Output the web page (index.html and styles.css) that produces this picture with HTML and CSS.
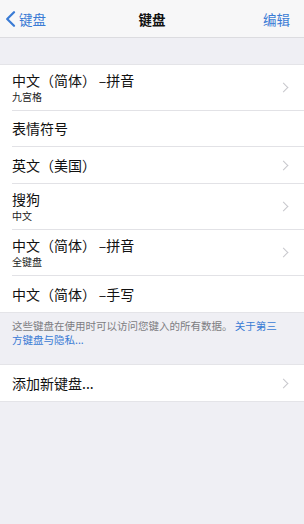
FILE: index.html
```html
<!DOCTYPE html>
<html lang="zh-CN">
<head>
<meta charset="utf-8">
<link rel="stylesheet" href="styles.css">
</head>
<body>
<header class="nav">
  <div class="nav-back">
    <svg class="back-icon" width="11" height="16" viewBox="0 0 11 16"><path d="M9 1.2 L2.2 8 L9 14.8" fill="none" stroke="currentColor" stroke-width="2.2" stroke-linecap="round" stroke-linejoin="round"/></svg>
    <span>键盘</span>
  </div>
  <div class="nav-title">键盘</div>
  <div class="nav-edit">编辑</div>
</header>
<div class="spacer"></div>
<section class="group">
  <div class="row h46"><div class="cell"><div class="texts"><div class="title">中文（简体）&thinsp;–拼音</div><div class="sub">九宫格</div></div><span class="chev"></span></div></div>
  <div class="row h36"><div class="cell"><div class="texts"><div class="title">表情符号</div></div></div></div>
  <div class="row h37"><div class="cell"><div class="texts"><div class="title">英文（美国）</div></div><span class="chev"></span></div></div>
  <div class="row h46"><div class="cell"><div class="texts"><div class="title">搜狗</div><div class="sub">中文</div></div><span class="chev"></span></div></div>
  <div class="row h46"><div class="cell"><div class="texts"><div class="title">中文（简体）&thinsp;–拼音</div><div class="sub">全键盘</div></div><span class="chev"></span></div></div>
  <div class="row h36 last"><div class="cell"><div class="texts"><div class="title">中文（简体）&thinsp;–手写</div></div></div></div>
</section>
<div class="footer">
  <div class="fline">这些键盘在使用时可以访问您键入的所有数据。 <span class="link">关于第三</span></div>
  <div class="fline link">方键盘与隐私...</div>
</div>
<section class="group">
  <div class="row h36 last"><div class="cell"><div class="texts"><div class="title">添加新键盘...</div></div><span class="chev"></span></div></div>
</section>
</body>
</html>
```
FILE: styles.css
```css
* { box-sizing: border-box; }
html, body { margin: 0; padding: 0; }
body {
  background: #efeff4;
  font-family: "Noto Sans CJK SC", "Noto Sans", sans-serif;
  color: #111;
  width: 304px;
  height: 524px;
  overflow: hidden;
}
.nav {
  height: 38px;
  background: #f7f7f8;
  border-bottom: 1px solid #dcdce0;
  display: flex;
  align-items: center;
  justify-content: space-between;
  padding: 0 14px 0 5px;
  position: relative;
}
.nav-back {
  display: flex;
  align-items: center;
  gap: 3px;
  color: #3a7bd5;
  font-size: 13.5px;
}
.back-icon { display: block; }
.nav-title {
  position: absolute;
  left: 0;
  right: 0;
  text-align: center;
  font-size: 13.5px;
  font-weight: 700;
  pointer-events: none;
}
.nav-edit {
  color: #3a7bd5;
  font-size: 13.5px;
}
.spacer { height: 26px; }
.group {
  background: #fff;
  border-top: 1px solid #e4e4e8;
  border-bottom: 1px solid #e4e4e8;
}
.row { padding-left: 12px; }
.cell {
  display: flex;
  align-items: center;
  justify-content: space-between;
  height: 100%;
  padding-right: 15px;
  border-bottom: 1px solid #e2e2e6;
}
.row.last .cell { border-bottom: none; }
.h46 { height: 46px; }
.h36 { height: 36px; }
.h37 { height: 37px; }
.texts { display: flex; flex-direction: column; gap: 1px; }
.title { font-size: 14px; line-height: 17px; color: #111; }
.sub { font-size: 10px; line-height: 14px; color: #222; }
.chev {
  width: 7px;
  height: 7px;
  border-top: 1.5px solid #c7c7cc;
  border-right: 1.5px solid #c7c7cc;
  transform: rotate(45deg);
  margin-right: 2px;
}
.footer {
  height: 51px;
  padding: 6px 12px 0 12px;
  font-size: 10.5px;
  line-height: 14px;
  color: #7d7d82;
}
.fline { white-space: nowrap; }
.link { color: #3a7bd5; }
```
